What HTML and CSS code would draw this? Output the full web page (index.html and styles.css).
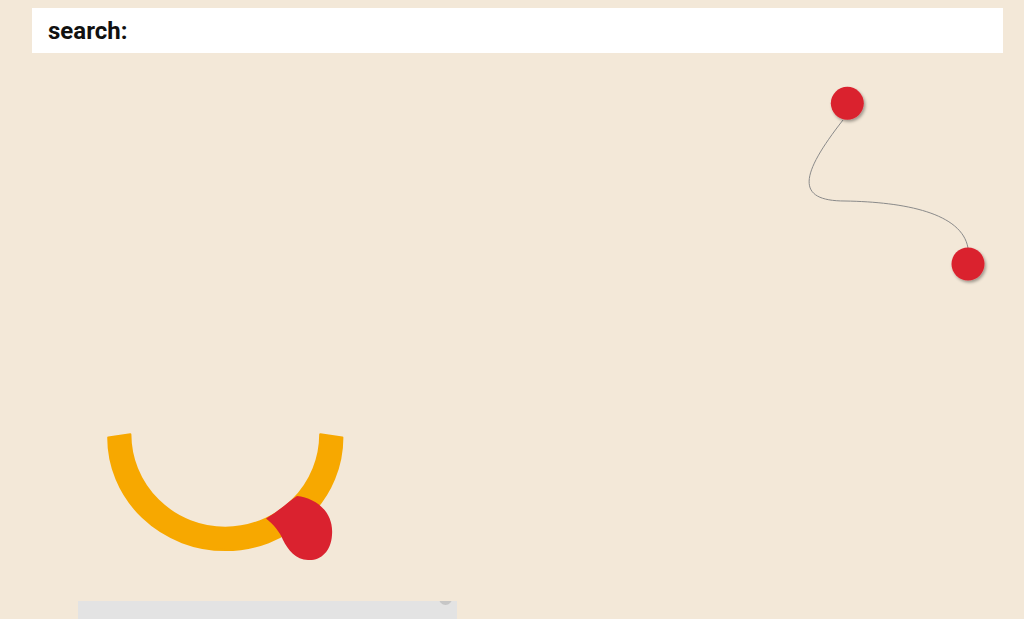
FILE: index.html
```html
<!DOCTYPE html>
<html>
<head>
<meta charset="utf-8">
<link rel="stylesheet" href="styles.css">
</head>
<body>
<div class="page">
  <header class="search-bar"><span class="search-label">search:</span></header>
  <div class="canvas">
    <svg class="canvas-svg" width="1024" height="619" viewBox="0 0 1024 619" xmlns="http://www.w3.org/2000/svg">
      <defs>
        <filter id="sh" x="-50%" y="-50%" width="200%" height="200%">
          <feDropShadow dx="1.5" dy="2" stdDeviation="1.6" flood-color="#000" flood-opacity="0.35"/>
        </filter>
      </defs>
      <path d="M 843 120 C 800 175, 795 201, 845 201 C 905 202, 962 213, 968 248" fill="none" stroke="#8a8a8a" stroke-width="1"/>
      <circle cx="847.3" cy="103.3" r="16.5" fill="#da222f" filter="url(#sh)"/>
      <circle cx="968" cy="264" r="16.5" fill="#da222f" filter="url(#sh)"/>
      <path d="M 108.3 437.5 A 117 112.5 0 0 0 342.3 437.5 L 320.3 434.3 A 95 93.5 0 0 1 130.3 434.3 Z" fill="#f7a800" stroke="#f7a800" stroke-width="2.2" stroke-linejoin="round"/>
      <path d="M 266 518.5 C 280 510, 288 502, 297 496 C 316 498, 334 512, 332 535 C 331 552, 320 561, 308 560 C 296 560, 288 550, 283 540 C 280 532, 273 524, 266 518.5 Z" fill="#da222f"/>
    </svg>
  </div>
  <div class="panel"><span class="panel-knob"></span></div>
</div>
</body>
</html>
```
FILE: styles.css
```css
html, body {
  margin: 0;
  padding: 0;
}
body {
  background: #f3e8d8;
  font-family: Roboto, "Liberation Sans", sans-serif;
  overflow: hidden;
  width: 1024px;
  height: 619px;
}
.page {
  position: relative;
  padding-top: 8px;
}
.search-bar {
  margin-left: 32px;
  width: 971px;
  height: 45px;
  background: #ffffff;
  display: flex;
  align-items: center;
  padding-left: 16px;
  box-sizing: border-box;
  position: relative;
  z-index: 1;
}
.search-label {
  font-weight: 700;
  font-size: 24px;
  color: #111;
  line-height: 1;
}
.canvas {
  height: 548px;
}
.canvas-svg {
  position: absolute;
  left: 0;
  top: 0;
}
.panel {
  position: relative;
  margin-left: 78px;
  width: 379px;
  height: 40px;
  background: #e3e3e3;
  overflow: hidden;
}
.panel-knob {
  position: absolute;
  left: 361px;
  top: -9px;
  width: 13px;
  height: 13px;
  border-radius: 50%;
  background: #c6c6c6;
}
```
